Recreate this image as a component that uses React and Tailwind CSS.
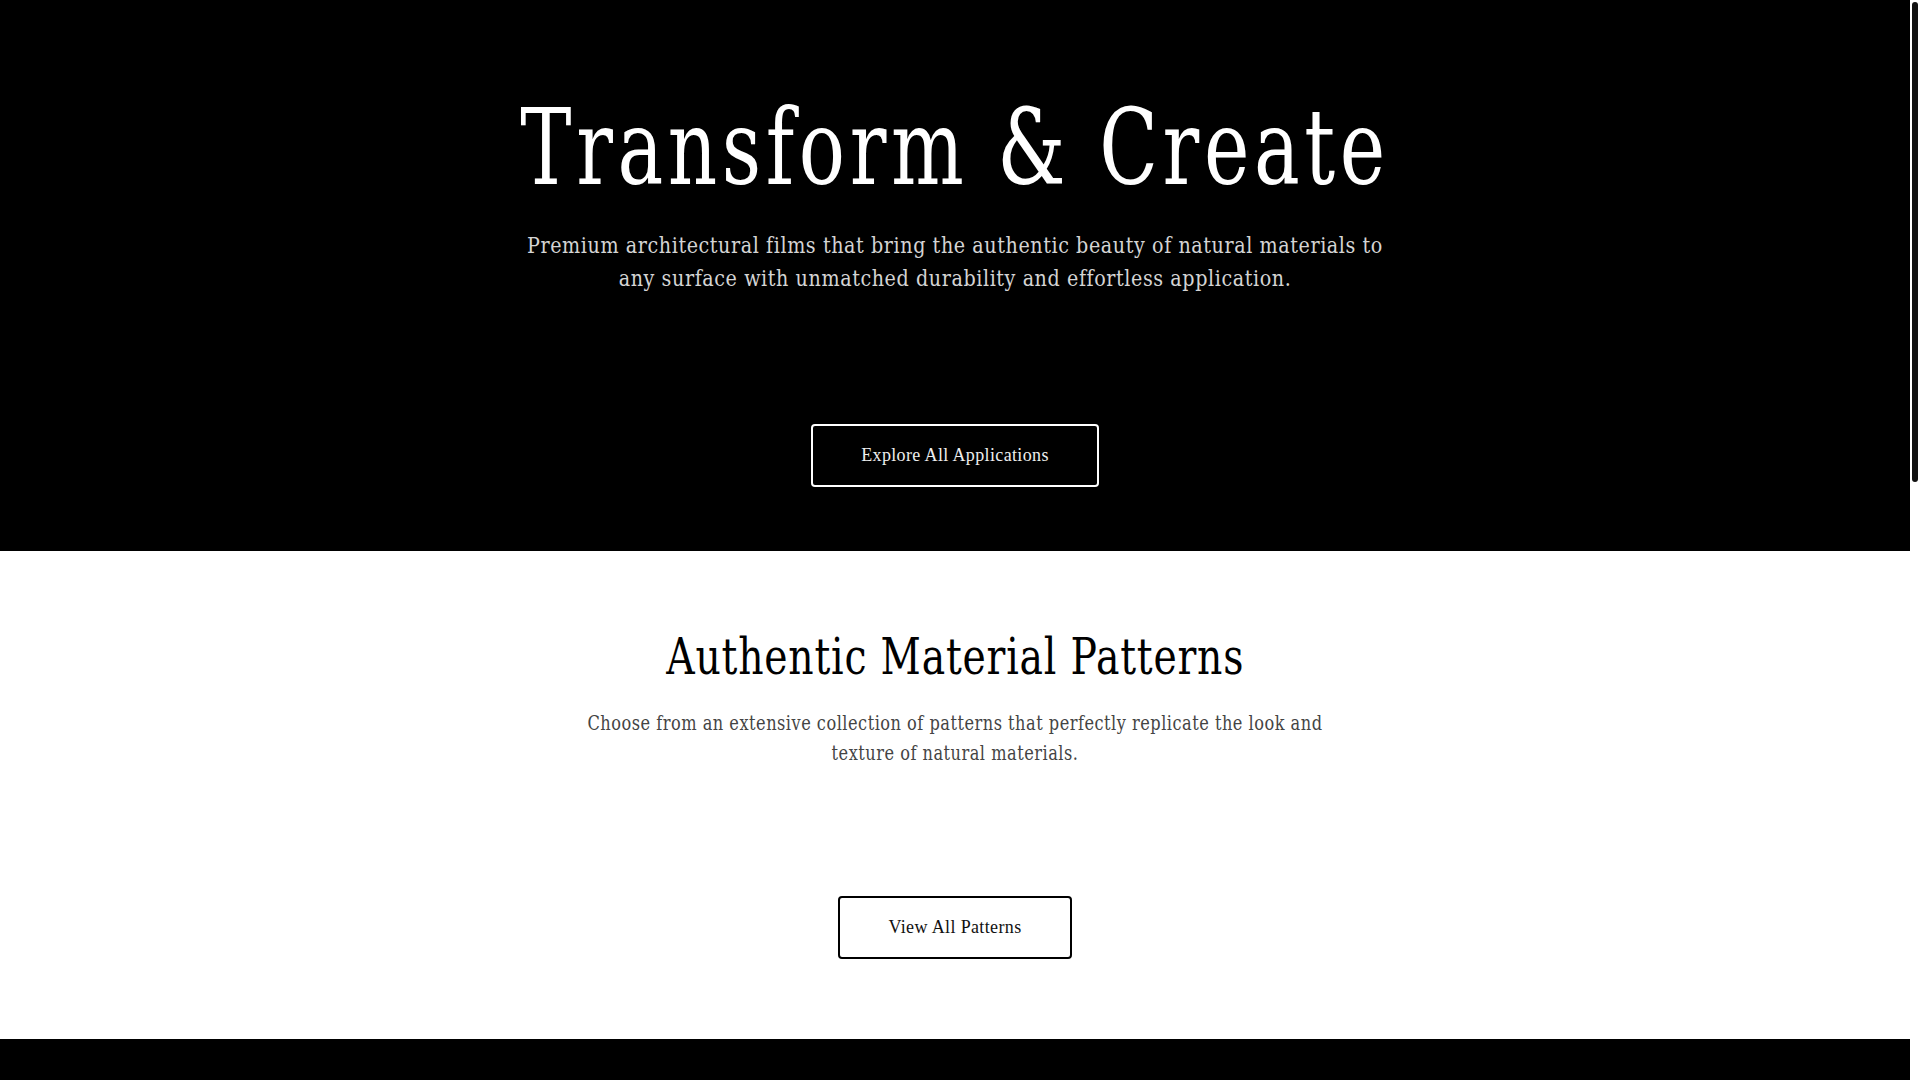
export default function App() {
  return (
    <div className="relative bg-white pr-[10px]">
      <section className="bg-black text-white flex flex-col items-center pt-[96px] pb-[64px]">
        <h1 className="font-['DejaVu_Serif',_serif] font-normal text-[104px] leading-none tracking-[0.06em] text-center scale-x-[0.738]">
          Transform &amp; Create
        </h1>
        <p className="mt-[29px] max-w-[1010px] text-center font-['DejaVu_Serif',_serif] text-[22px] leading-[33px] tracking-[0.03em] text-[#d4d4d4] scale-x-[0.87]">
          Premium architectural films that bring the authentic beauty of natural materials to any surface with unmatched durability and effortless application.
        </p>
        <button className="mt-[129px] border-2 border-white rounded-[4px] px-[48px] py-4 font-['Liberation_Serif',_serif] text-[18px] leading-[27px] tracking-[0.02em] text-[#eee] bg-black">
          Explore All Applications
        </button>
      </section>
      <section className="bg-white text-black flex flex-col items-center pt-[74px] pb-[80px]">
        <h2 className="font-['DejaVu_Serif',_serif] font-normal text-[50px] leading-[1.3] tracking-[0.02em] text-center scale-x-[0.787]">
          Authentic Material Patterns
        </h2>
        <p className="mt-[18px] max-w-[920px] text-center font-['DejaVu_Serif',_serif] text-[20px] leading-[30px] tracking-[0.03em] text-[#444] scale-x-[0.81]">
          Choose from an extensive collection of patterns that perfectly replicate the look and texture of natural materials.
        </p>
        <button className="mt-[128px] border-2 border-black rounded-[4px] px-[48px] py-4 font-['Liberation_Serif',_serif] text-[18px] leading-[27px] tracking-[0.02em] text-[#111] bg-white">
          View All Patterns
        </button>
      </section>
      <section className="bg-black h-[1392px]"></section>
      <div className="fixed top-0 right-0 w-[10px] h-screen bg-white">
        <div className="mx-[2px] mt-[2px] h-[480px] rounded-full bg-[#111]"></div>
      </div>
    </div>
  );
}
